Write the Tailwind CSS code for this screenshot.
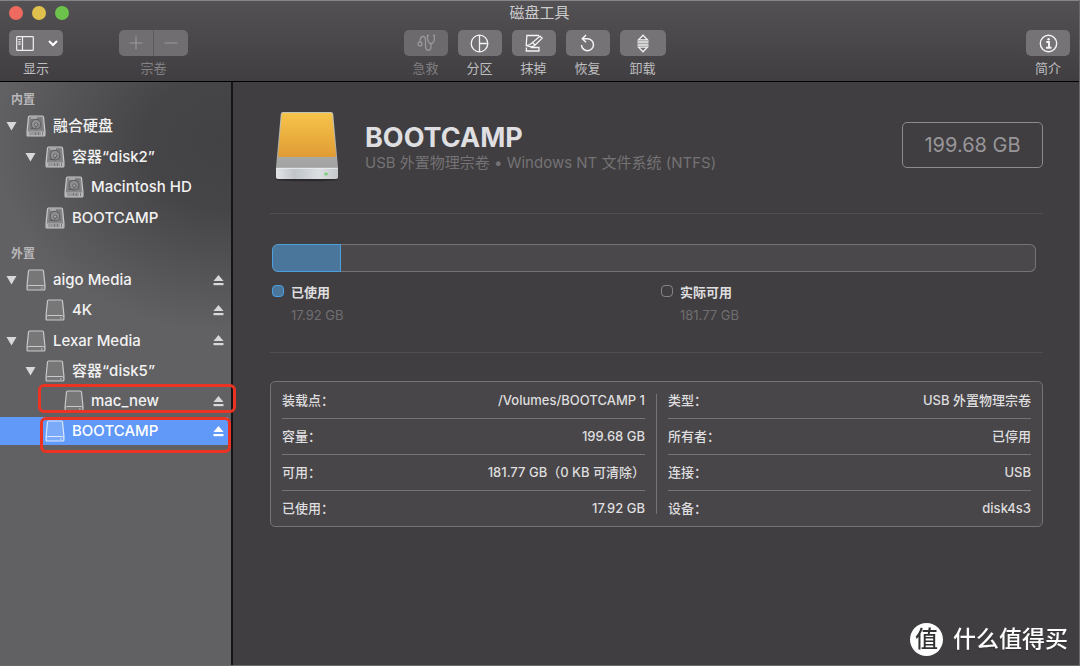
<!DOCTYPE html>
<html lang="zh-CN">
<head>
<meta charset="utf-8">
<meta name="viewport" content="width=device-width, initial-scale=1">
<title>磁盘工具</title>
<script src="https://cdn.jsdelivr.net/npm/@tailwindcss/browser@4"></script>
</head>
<body class="flex min-h-screen flex-col border-r border-b border-[#6b696c] bg-[#403e40] font-['Inter','Noto_Sans_CJK_SC',sans-serif] text-[#dedddf]">

<svg class="hidden" aria-hidden="true">
  <symbol id="hdd" viewBox="0 0 20 22">
    <path d="M3.600 1h12.800q1 0 1.100 1l1.400 14v4q0 1-1 1H2.100q-1 0-1-1v-4L2.500 2q.1-1 1.100-1z" fill="#858487" stroke="#c9c8ca" stroke-width="1.200"/>
    <path d="M1.500 16.500h17v4h-17z" fill="#b9b8ba"/>
    <path d="M4 17v3M16.500 17v3M6 17v3M8 17v3M9.500 17v3M11 17v3M12.500 17v3M14 17v3" stroke="#69686a" stroke-width=".8"/>
    <path d="M5 3h10l1.200 11H3.800z" fill="#77767a"/>
    <circle cx="10" cy="9.200" r="4.800" fill="#8e8d90" stroke="#5d5c5f" stroke-width="1"/>
    <circle cx="10.300" cy="9.700" r="1.700" fill="#aaa9ac" stroke="#5d5c5f" stroke-width=".9"/>
    <path d="M5 13.500h4l3-4" fill="none" stroke="#5d5c5f" stroke-width="1"/>
    <path d="M5 3h6" stroke="#d0cfd1" stroke-width="1"/>
  </symbol>
  <symbol id="ext" viewBox="0 0 20 22">
    <path d="M3.600 1h12.800q1 0 1.100 1l1.400 14v4q0 1-1 1H2.100q-1 0-1-1v-4L2.500 2q.1-1 1.100-1z" fill="currentColor" fill-opacity=".22" stroke="currentColor" stroke-width="1.200"/>
    <path d="M1.300 17.800q.3-1.300 1.300-1.300h14.800q1 0 1.300 1.300" fill="none" stroke="currentColor" stroke-width="1"/>
    <path d="M15 19h1.500" stroke="currentColor" stroke-width="1"/>
  </symbol>
  <symbol id="tri" viewBox="0 0 11 10"><path d="M.5 1h10l-5 8.500z" fill="#d8d7d9"/></symbol>
  <symbol id="eject" viewBox="0 0 11 11"><path d="M5.500 0l5 6H.5z" fill="currentColor"/><path d="M.5 8h10v2.200H.5z" fill="currentColor"/></symbol>
</svg>

<header class="flex flex-col border-t border-b border-t-[#858486] border-b-black bg-linear-to-b from-[#535153] to-[#403e40] pb-[3px]">
  <div class="grid h-6 grid-cols-[1fr_auto_1fr] items-center pr-[9px] pl-[9px]">
    <div class="flex gap-[9px]">
      <button aria-label="关闭" class="size-[14px] rounded-full bg-[#ee6a5f]"></button>
      <button aria-label="最小化" class="size-[14px] rounded-full bg-[#e0c04c]"></button>
      <button aria-label="缩放" class="size-[14px] rounded-full bg-[#6cc24a]"></button>
    </div>
    <h1 class="text-[15px] leading-6 text-[#cccbcd]">磁盘工具</h1>
  </div>
  <div class="mt-[5px] grid grid-cols-[1fr_auto_1fr] pr-[9px] pl-[9px] text-[13px] leading-5 text-[#bfbec0]">
    <div class="flex gap-14">
      <div class="flex flex-col items-center gap-0.5">
        <button aria-label="显示" class="flex h-[26px] w-[54px] items-center justify-between rounded-[5px] bg-[#757376] pr-1 pl-[7px]">
          <svg class="h-[15px] w-[18px]" viewBox="0 0 18 15" fill="none" stroke="#f0f0f0" stroke-width="1.200"><rect x=".7" y=".7" width="16.600" height="13.600" rx=".5"/><path d="M6.500 1v13M2.300 3.500h2.400M2.300 5.800h2.400M2.300 8.100h2.400"/></svg>
          <svg class="size-3" viewBox="0 0 12 12" fill="none" stroke="#fff" stroke-width="2"><path d="M2 4l4 4 4-4"/></svg>
        </button>
        <span>显示</span>
      </div>
      <div class="flex flex-col items-center gap-0.5 text-[#858386]">
        <div class="flex overflow-hidden rounded-[5px] bg-[#706e71] text-[#99979a]">
          <button disabled aria-label="添加宗卷" class="grid h-[26px] w-[35px] place-items-center border-r border-[#5c5a5d]"><svg class="size-[14px]" viewBox="0 0 14 14" stroke="currentColor" stroke-width="1.200"><path d="M7 .5v13M.5 7h13"/></svg></button>
          <button disabled aria-label="移除宗卷" class="grid h-[26px] w-[34px] place-items-center"><svg class="size-[14px]" viewBox="0 0 14 14" stroke="currentColor" stroke-width="1.200"><path d="M.5 7h13"/></svg></button>
        </div>
        <span>宗卷</span>
      </div>
    </div>
    <div class="mr-[10px] flex gap-[10px]">
      <div class="flex flex-col items-center gap-0.5 text-[#7f7d80]">
        <button disabled aria-label="急救" class="grid h-[26px] w-11 place-items-center rounded-[5px] bg-[#6c6a6d] text-[#99979a]"><svg class="h-[18px] w-[18px]" viewBox="0 0 18 18" fill="none" stroke="currentColor" stroke-width="1.300"><circle cx="3" cy="10" r="2"/><path d="M3 8c0-7 5.500-7 5.500-2v6c0 5.500 5.500 5.500 5.500 1V9.500M12 1.500h-1.500C10 6 11.500 9.500 14 9.500S18 6 17.300 1.500H16"/></svg></button>
        <span>急救</span>
      </div>
      <div class="flex flex-col items-center gap-0.5">
        <button aria-label="分区" class="grid h-[26px] w-11 place-items-center rounded-[5px] bg-[#757376] text-[#f4f4f4]"><svg class="size-[19px]" viewBox="0 0 19 19" fill="none" stroke="currentColor" stroke-width="1.300"><circle cx="9.500" cy="9.500" r="8.300"/><path d="M9.500 1v17M9.500 9.500H18"/></svg></button>
        <span>分区</span>
      </div>
      <div class="flex flex-col items-center gap-0.5">
        <button aria-label="抹掉" class="grid h-[26px] w-11 place-items-center rounded-[5px] bg-[#757376] text-[#f4f4f4]"><svg class="size-[18px]" viewBox="0 0 18 18" fill="none" stroke="currentColor" stroke-width="1.300"><path d="M14 1.500H1.900L1.200 11.500C6 11.500 7.500 8 15 2.200l2.200 2L9.700 11.500C7 13.500 4 12.700 1.200 11.500M7 8l3 3"/><path d="M5.500 13.500H14v3.500H1.300l.2-3.500"/></svg></button>
        <span>抹掉</span>
      </div>
      <div class="flex flex-col items-center gap-0.5">
        <button aria-label="恢复" class="grid h-[26px] w-11 place-items-center rounded-[5px] bg-[#757376] text-[#f4f4f4]"><svg class="size-[18px]" viewBox="0 0 18 18" fill="none" stroke="currentColor" stroke-width="1.500"><path d="M2.500 11a6 6 0 1 0 6-6.300H3.500M7 1L3.300 4.700 7 8.300"/></svg></button>
        <span>恢复</span>
      </div>
      <div class="flex flex-col items-center gap-0.5">
        <button aria-label="卸载" class="grid h-[26px] w-[46px] place-items-center rounded-[5px] bg-[#757376] text-[#f4f4f4]"><svg class="h-[19px] w-3" viewBox="0 0 12 19" fill="none" stroke="currentColor" stroke-width="1.300"><path d="M6 1.200L10.500 5.800h-9zM6 17.800l4.500-4.600h-9z"/><path d="M.5 8h11M.5 11h11" stroke-width="1.300"/><path d="M.5 9.500h11" stroke-opacity=".4"/></svg></button>
        <span>卸载</span>
      </div>
    </div>
    <div class="flex flex-col items-center gap-0.5 justify-self-end">
      <button aria-label="简介" class="grid h-[26px] w-11 place-items-center rounded-[5px] bg-[#757376] text-[#f4f4f4]"><svg class="size-[19px]" viewBox="0 0 19 19" fill="none" stroke="currentColor" stroke-width="1.400"><circle cx="9.500" cy="9.500" r="8.200"/><path d="M7.300 8h2.700v5.500M7 13.700h5.500" stroke-width="1.900"/><circle cx="9.600" cy="5.200" r="1.300" fill="currentColor" stroke="none"/></svg></button>
      <span>简介</span>
    </div>
  </div>
</header>

<div class="flex flex-1">
  <nav aria-label="磁盘" class="w-[233px] shrink-0 border-r-2 border-[#151415] bg-[radial-gradient(ellipse_230px_190px_at_225px_60px,#424143_0%,#454446_35%,#616062_100%)] pt-[7px] text-[15px] font-medium text-[#f2f2f3]">
    <h2 class="pl-[11px] text-xs leading-[22px] font-bold text-[#b8b7b9]">内置</h2>
    <ul class="grid h-[122px] auto-rows-fr">
      <li class="flex items-center pl-[6px]"><button aria-label="折叠" class="mr-[9px]"><svg class="h-[10px] w-[11px]"><use href="#tri"/></svg></button><svg class="mr-[7px] h-[22px] w-5"><use href="#hdd"/></svg>融合硬盘</li>
      <li class="flex items-center pl-[25px]"><button aria-label="折叠" class="mr-[9px]"><svg class="h-[10px] w-[11px]"><use href="#tri"/></svg></button><svg class="mr-[7px] h-[22px] w-5"><use href="#hdd"/></svg>容器“disk2”</li>
      <li class="flex items-center pl-16"><svg class="mr-[7px] h-[22px] w-5"><use href="#hdd"/></svg>Macintosh HD</li>
      <li class="flex items-center pl-[45px]"><svg class="mr-[7px] h-[22px] w-5"><use href="#hdd"/></svg>BOOTCAMP</li>
    </ul>
    <h2 class="mt-[10px] pl-[11px] text-xs leading-[22px] font-bold text-[#b8b7b9]">外置</h2>
    <ul class="grid h-[182px] auto-rows-fr">
      <li class="flex items-center pr-[7px] pl-[6px]"><button aria-label="折叠" class="mr-[9px]"><svg class="h-[10px] w-[11px]"><use href="#tri"/></svg></button><svg class="mr-[7px] h-[22px] w-5 text-[#c9c8ca]"><use href="#ext"/></svg>aigo Media<button aria-label="推出" class="ml-auto text-[#d8d7d9]"><svg class="size-[11px]"><use href="#eject"/></svg></button></li>
      <li class="flex items-center pr-[7px] pl-[45px]"><svg class="mr-[7px] h-[22px] w-5 text-[#c9c8ca]"><use href="#ext"/></svg>4K<button aria-label="推出" class="ml-auto text-[#d8d7d9]"><svg class="size-[11px]"><use href="#eject"/></svg></button></li>
      <li class="flex items-center pr-[7px] pl-[6px]"><button aria-label="折叠" class="mr-[9px]"><svg class="h-[10px] w-[11px]"><use href="#tri"/></svg></button><svg class="mr-[7px] h-[22px] w-5 text-[#c9c8ca]"><use href="#ext"/></svg>Lexar Media<button aria-label="推出" class="ml-auto text-[#d8d7d9]"><svg class="size-[11px]"><use href="#eject"/></svg></button></li>
      <li class="flex items-center pl-[25px]"><button aria-label="折叠" class="mr-[9px]"><svg class="h-[10px] w-[11px]"><use href="#tri"/></svg></button><svg class="mr-[7px] h-[22px] w-5 text-[#c9c8ca]"><use href="#ext"/></svg>容器“disk5”</li>
      <li class="relative flex items-center pr-[7px] pl-16"><svg class="mr-[7px] h-[22px] w-5 text-[#c9c8ca]"><use href="#ext"/></svg>mac_new<button aria-label="推出" class="ml-auto text-[#d8d7d9]"><svg class="size-[11px]"><use href="#eject"/></svg></button>
        <span class="pointer-events-none absolute top-[-2px] right-[-5px] left-[38px] h-[29px] rounded-md border-3 border-[#eb3323]"></span></li>
      <li class="relative flex items-start text-white"><div class="mr-[3px] flex h-7 flex-1 items-center bg-[#6199f8] pt-px pr-1 pl-[45px]"><svg class="mr-[7px] h-[22px] w-5 text-[#dbe8ff]"><use href="#ext"/></svg>BOOTCAMP<button aria-label="推出" class="ml-auto"><svg class="size-[11px]"><use href="#eject"/></svg></button></div>
        <span class="pointer-events-none absolute top-0 right-0 left-10 h-9 rounded-md border-3 border-[#eb3323]"></span></li>
    </ul>
  </nav>

  <main class="flex min-w-0 flex-1 flex-col pt-7 pr-[36px] pl-[37px]">
    <section class="flex items-start border-b border-[#504e51] pb-[31px]">
      <svg class="mr-[25px] ml-1 h-[72px] w-[66px] shrink-0" viewBox="0 0 66 72" aria-hidden="true">
        <defs>
          <linearGradient id="face" x2="0" y2="1"><stop stop-color="#f6c44a"/><stop offset="1" stop-color="#e09c34"/></linearGradient>
          <linearGradient id="shell" x2="0" y2="1"><stop stop-color="#c3c4b9"/><stop offset="1" stop-color="#a0a0a1"/></linearGradient>
          <linearGradient id="front"><stop stop-color="#e2e4e7"/><stop offset=".3" stop-color="#c0c5ca"/><stop offset=".7" stop-color="#dcdfe2"/><stop offset="1" stop-color="#c5c8cb"/></linearGradient>
        </defs>
        <ellipse cx="33" cy="69.500" rx="31" ry="1.800" fill="#2c2a2c"/>
        <path d="M9 2h48q2 0 2.200 2L64 57v3H2v-3L6.800 4Q7 2 9 2z" fill="url(#shell)"/>
        <path d="M9 3h48q1 0 1.200 1.500L62 45q.1 2-1.500 2h-55Q4 47 4.100 45L7.800 4.500Q8 3 9 3z" fill="url(#face)"/>
        <path d="M2 58h62v9q0 2-2 2H4q-2 0-2-2z" fill="url(#front)"/>
        <path d="M2.500 58.300h61" stroke="#eceeef"/>
        <ellipse cx="52" cy="64" rx="2" ry="1.500" fill="#7fd07c"/>
      </svg>
      <div class="min-w-0 flex-1 pt-3">
        <h2 class="text-[27px] leading-8 font-bold text-[#dfdee0]">BOOTCAMP</h2>
        <p class="-mt-px text-[15px] leading-5 text-[#747275]">USB 外置物理宗卷 • Windows NT 文件系统 (NTFS)</p>
      </div>
      <div class="mt-3 grid h-[46px] w-[141px] shrink-0 place-items-center rounded-[5px] border border-[#8c8a8d] text-xl text-[#98969a]">199.68 GB</div>
    </section>

    <section class="border-b border-[#504e51] px-[2px] pt-[30px] pb-[27px]">
      <div class="mr-[5px] flex h-7 overflow-hidden rounded-md bg-[#4a484a] inset-ring inset-ring-[#757376]" role="meter" aria-label="已使用容量" aria-valuenow="9" aria-valuemin="0" aria-valuemax="100">
        <div class="rounded-l-md border border-[#4ba0e2] bg-[#4a769b]" style="width:9%"></div>
      </div>
      <div class="mt-[10px] mr-[5px] grid grid-cols-2 gap-[14px] text-[13px]">
        <div class="flex gap-[7px]"><span class="mt-[3px] size-3 rounded-[4px] border border-[#4ba0e2] bg-[#4a769b]"></span><div><div class="leading-5 font-bold">已使用</div><div class="mt-[3px] leading-5 text-[#706e71]">17.92 GB</div></div></div>
        <div class="flex gap-[7px]"><span class="mt-[3px] size-3 rounded-[4px] border border-[#858386]"></span><div><div class="leading-5 font-bold">实际可用</div><div class="mt-[3px] leading-5 text-[#706e71]">181.77 GB</div></div></div>
      </div>
    </section>

    <section class="mt-7 grid grid-cols-[1fr_1px_1fr] gap-[11px] rounded-[5px] border border-[#757376] bg-[#484648] px-[11px] text-[13px] font-medium">
      <dl class="divide-y divide-[#757376] leading-[35px]">
        <div class="flex justify-between pt-[1px]"><dt>装载点：</dt><dd>/Volumes/BOOTCAMP 1</dd></div>
        <div class="flex justify-between"><dt>容量：</dt><dd>199.68 GB</dd></div>
        <div class="flex justify-between"><dt>可用：</dt><dd>181.77 GB（0 KB 可清除）</dd></div>
        <div class="flex justify-between"><dt>已使用：</dt><dd>17.92 GB</dd></div>
      </dl>
      <div class="my-3 bg-[#757376]"></div>
      <dl class="divide-y divide-[#757376] leading-[35px]">
        <div class="flex justify-between pt-[1px]"><dt>类型：</dt><dd>USB 外置物理宗卷</dd></div>
        <div class="flex justify-between"><dt>所有者：</dt><dd>已停用</dd></div>
        <div class="flex justify-between"><dt>连接：</dt><dd>USB</dd></div>
        <div class="flex justify-between"><dt>设备：</dt><dd>disk4s3</dd></div>
      </dl>
    </section>
  </main>
</div>

<div class="fixed right-3 bottom-[10px] flex items-center gap-[10px] text-white text-shadow-sm">
  <span class="grid size-[33px] place-items-center rounded-full bg-white text-[23px] leading-none font-medium text-[#333133] text-shadow-none">值</span>
  <span class="text-[23px] leading-[33px] font-medium">什么值得买</span>
</div>
</body>
</html>
